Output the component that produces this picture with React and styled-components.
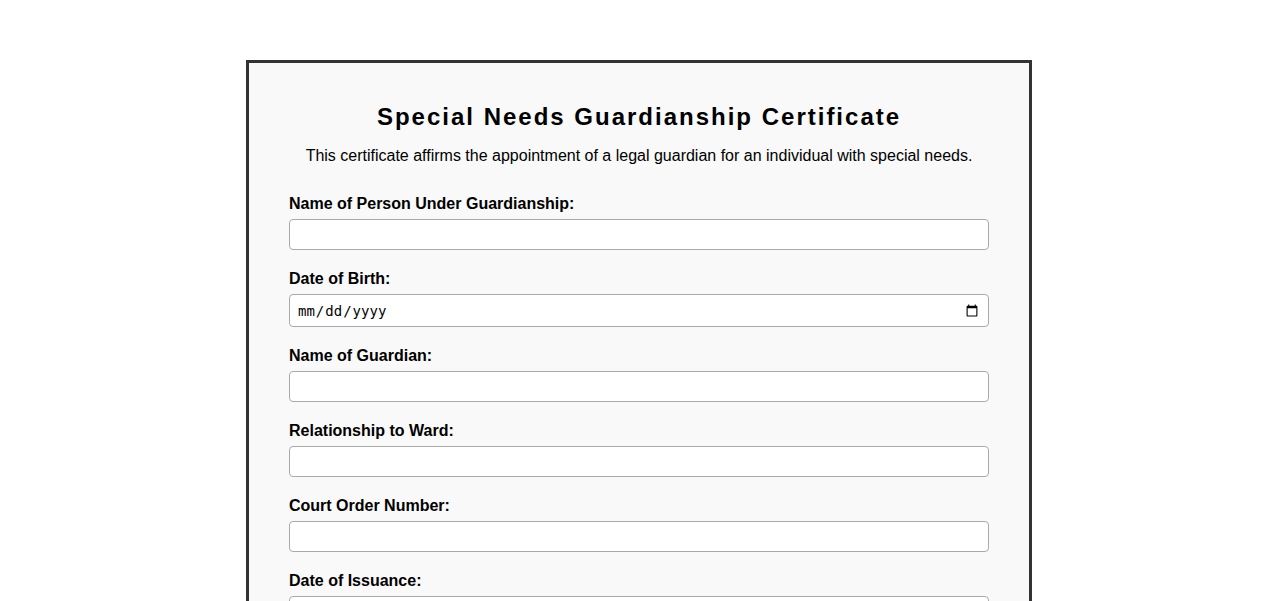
import React from 'react'
import styled, { createGlobalStyle } from 'styled-components'

const GlobalStyle = createGlobalStyle`
    body {
        margin: 0;
        background: #fff;
        font-family: "Liberation Sans", Arial, sans-serif;
        color: #000;
    }
`;

const Certificate = styled.div`
    max-width: 700px;
    margin: 60px auto;
    padding: 40px;
    background-color: #f9f9f9;
    border: 3px solid #333;
`;

const Title = styled.h1`
    margin: 0 0 16px;
    text-align: center;
    font-size: 24px;
    letter-spacing: 2px;
`;

const Intro = styled.p`
    margin: 0 0 30px;
    text-align: center;
    font-size: 16px;
`;

const Field = styled.div`
    margin-bottom: 20px;
`;

const Label = styled.label`
    display: block;
    margin-bottom: 6px;
    font-weight: bold;
    font-size: 16px;
`;

const Input = styled.input`
    display: block;
    box-sizing: border-box;
    width: 100%;
    padding: 6.5px 7px;
    font-size: 14px;
    border: 1px solid #aaa;
    border-radius: 4px;
    background: #fff;
`;

const fields = [
    { id: 'ward', label: 'Name of Person Under Guardianship:', type: 'text' },
    { id: 'dob', label: 'Date of Birth:', type: 'date' },
    { id: 'guardian', label: 'Name of Guardian:', type: 'text' },
    { id: 'relation', label: 'Relationship to Ward:', type: 'text' },
    { id: 'order', label: 'Court Order Number:', type: 'text' },
    { id: 'issued', label: 'Date of Issuance:', type: 'date' },
    { id: 'judge', label: 'Name of Presiding Judge:', type: 'text' },
]

const App = () => {
    return (
        <>
            <GlobalStyle />
            <Certificate>
                <Title>Special Needs Guardianship Certificate</Title>
                <Intro>This certificate affirms the appointment of a legal guardian for an individual with special needs.</Intro>
                {fields.map((f) => (
                    <Field key={f.id}>
                        <Label htmlFor={f.id}>{f.label}</Label>
                        <Input id={f.id} type={f.type} />
                    </Field>
                ))}
            </Certificate>
        </>
    )
}

export default App
